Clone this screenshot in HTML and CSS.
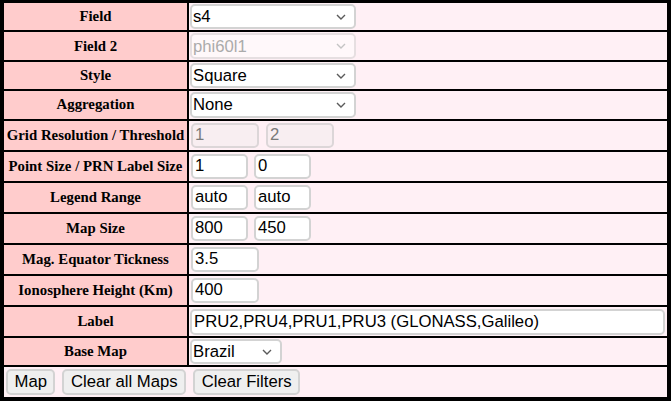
FILE: index.html
```html
<!DOCTYPE html>
<html>
<head>
<meta charset="utf-8">
<link rel="stylesheet" href="styles.css">
</head>
<body>
<table class="form">
  <colgroup><col class="c-label"><col class="c-value"></colgroup>
  <tr><th>Field</th><td><div class="ctrl"><span class="sel-wrap"><select class="sel-wide"><option>s4</option></select><svg class="chev" width="10" height="6" viewBox="0 0 10 6"><polyline points="1,1 5,5 9,1" /></svg></span></div></td></tr>
  <tr><th>Field 2</th><td><div class="ctrl"><span class="sel-wrap off"><select class="sel-wide" disabled><option>phi60l1</option></select><svg class="chev" width="10" height="6" viewBox="0 0 10 6"><polyline points="1,1 5,5 9,1" /></svg></span></div></td></tr>
  <tr><th>Style</th><td><div class="ctrl"><span class="sel-wrap"><select class="sel-wide"><option>Square</option></select><svg class="chev" width="10" height="6" viewBox="0 0 10 6"><polyline points="1,1 5,5 9,1" /></svg></span></div></td></tr>
  <tr><th>Aggregation</th><td><div class="ctrl"><span class="sel-wrap"><select class="sel-wide"><option>None</option></select><svg class="chev" width="10" height="6" viewBox="0 0 10 6"><polyline points="1,1 5,5 9,1" /></svg></span></div></td></tr>
  <tr><th>Grid Resolution / Threshold</th><td><div class="ctrl inputs gap7"><input class="in-md" type="text" value="1" disabled><input class="in-md" type="text" value="2" disabled></div></td></tr>
  <tr><th>Point Size / PRN Label Size</th><td><div class="ctrl inputs"><input class="in-sm" type="text" value="1"><input class="in-sm" type="text" value="0"></div></td></tr>
  <tr><th>Legend Range</th><td><div class="ctrl inputs"><input class="in-sm" type="text" value="auto"><input class="in-sm" type="text" value="auto"></div></td></tr>
  <tr><th>Map Size</th><td><div class="ctrl inputs"><input class="in-sm" type="text" value="800"><input class="in-sm" type="text" value="450"></div></td></tr>
  <tr><th>Mag. Equator Tickness</th><td><div class="ctrl inputs"><input class="in-md" type="text" value="3.5"></div></td></tr>
  <tr><th>Ionosphere Height (Km)</th><td><div class="ctrl inputs"><input class="in-md" type="text" value="400"></div></td></tr>
  <tr><th>Label</th><td><div class="ctrl"><input class="in-full" type="text" value="PRU2,PRU4,PRU1,PRU3 (GLONASS,Galileo)"></div></td></tr>
  <tr><th>Base Map</th><td><div class="ctrl"><span class="sel-wrap"><select class="sel-short"><option>Brazil</option></select><svg class="chev" width="10" height="6" viewBox="0 0 10 6"><polyline points="1,1 5,5 9,1" /></svg></span></div></td></tr>
  <tr><td colspan="2" class="actions"><div class="ctrl btns"><button>Map</button><button>Clear all Maps</button><button>Clear Filters</button></div></td></tr>
</table>
</body>
</html>
```

FILE: styles.css
```css
html, body {
  margin: 0;
  padding: 0;
  background: #000;
}

.form {
  table-layout: fixed;
  width: 667px;
  margin: 1px 2px 0 2px;
  border-collapse: separate;
  border-spacing: 2px;
  background: #000;
}

.c-label { width: 183px; }
.c-value { width: 478px; }

.form th {
  background: #ffcccc;
  font-family: "Liberation Serif", "Times New Roman", serif;
  font-size: 14.8px;
  font-weight: bold;
  color: #000;
  text-align: center;
  padding: 0;
  white-space: nowrap;
}

.form td {
  background: #fff0f5;
  padding: 0;
}

.ctrl {
  display: flex;
  align-items: center;
  gap: 6px;
  padding: 1px;
}

.inputs { padding-left: 2px; }
.gap7 { gap: 7px; }

select, input, button {
  font-family: "Liberation Sans", Arial, sans-serif;
  font-size: 16.7px;
  color: #000;
  box-sizing: border-box;
}

.sel-wrap {
  position: relative;
  display: block;
  line-height: 0;
}

select {
  -webkit-appearance: none;
  appearance: none;
  height: 25.4px;
  margin: 0;
  padding: 0 1px;
  border: 2px solid #d3d3d3;
  border-radius: 5px;
  background: #fff;
}

select:disabled {
  color: #ababab;
  border-color: #e6dfe1;
  background: #fff8fa;
  opacity: 1;
}

.chev {
  position: absolute;
  right: 10px;
  top: 10px;
  pointer-events: none;
}

.chev polyline {
  fill: none;
  stroke: #5a5a5a;
  stroke-width: 1.4;
}

.off .chev polyline { stroke: #c4c4c4; }

.sel-wide { width: 166px; }
.sel-short { width: 92px; }

input {
  height: 25px;
  margin: 1px 0;
  padding: 1px 2px;
  border: 2px solid #d3d3d3;
  border-radius: 5px;
  background: #fff;
}

input:disabled {
  background: #f8eef1;
  color: #7a7a7a;
  border-color: #dcd6d8;
}

.in-sm { width: 57px; }
.in-md { width: 68px; }
.in-full { width: 475px; height: 26px; margin: 1px 0 0 0; }

.btns { gap: 6px; padding: 1px; }

button {
  height: 26px;
  margin: 1px 0 1px 1px;
  padding: 0 6.5px;
  border: 2px solid #d3d3d3;
  border-radius: 5px;
  background: #efefef;
}
```
